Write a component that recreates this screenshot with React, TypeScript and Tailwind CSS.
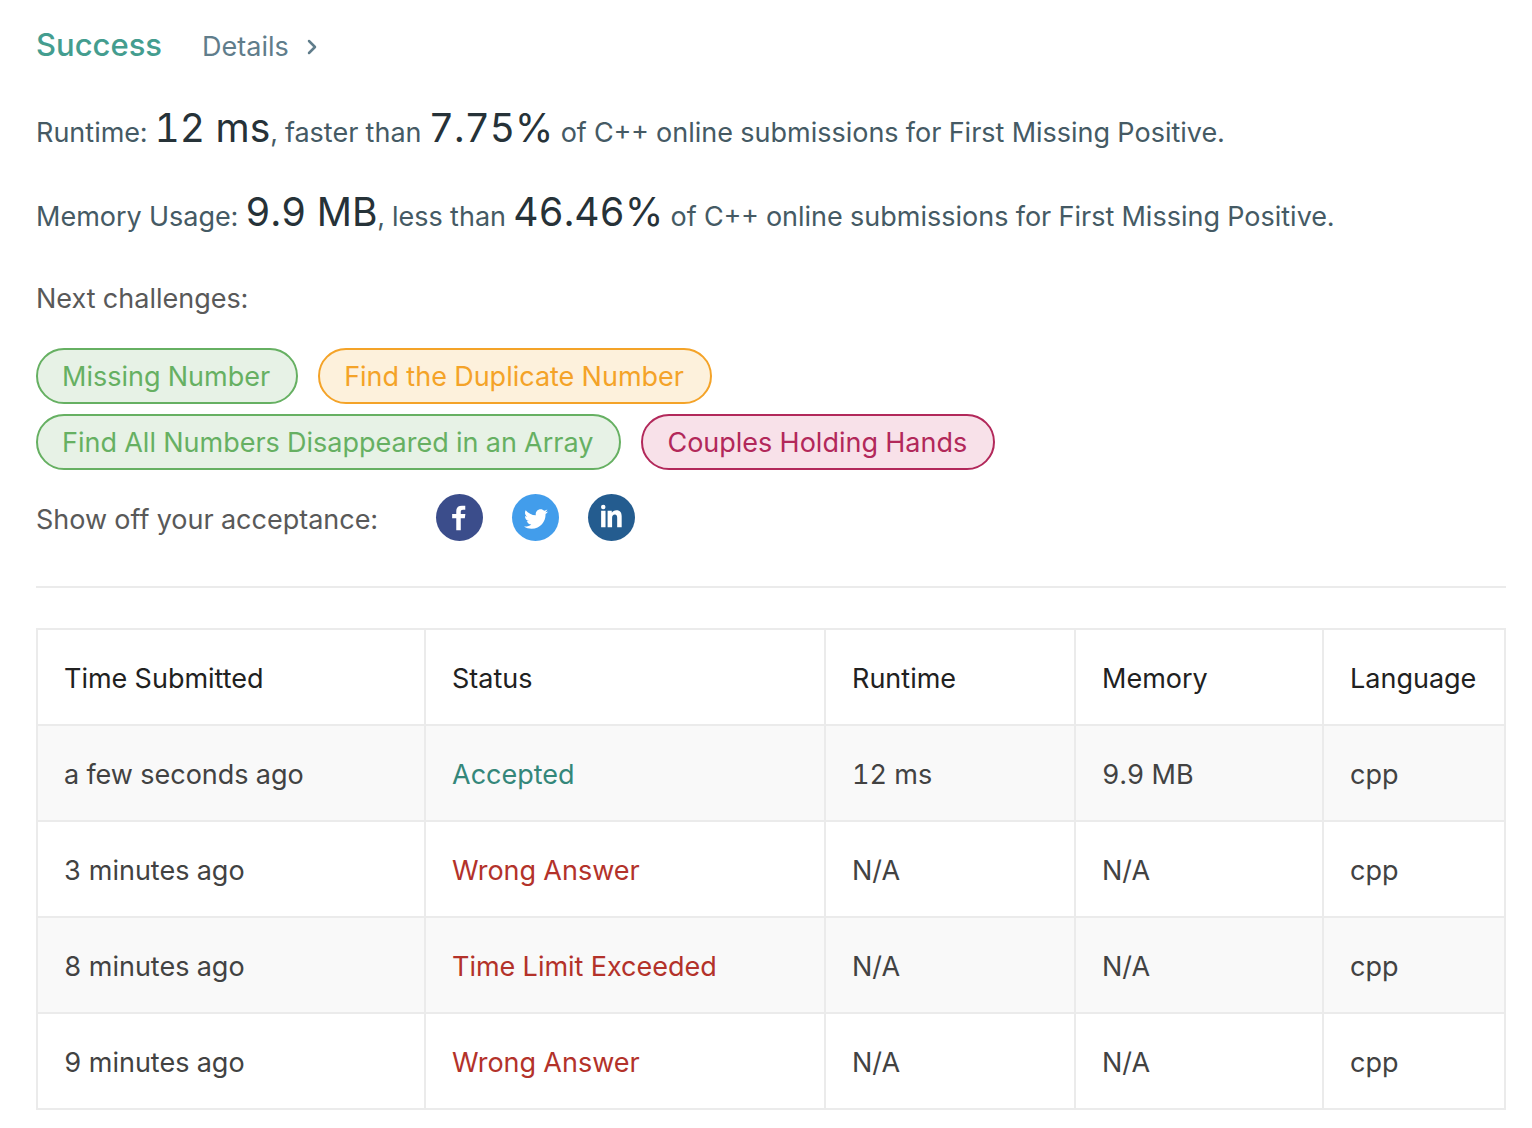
import { FaTwitter } from 'react-icons/fa';
import { ChevronRight } from 'lucide-react';

const tones = {
  easy: 'border-[#66b062] bg-[#e7f2e6] text-[#66b062]',
  medium: 'border-[#f4a328] bg-[#fdf1dc] text-[#f4a328]',
  hard: 'border-[#b2285a] bg-[#f8e1e9] text-[#b2285a]',
};

const challenges = [
  [
    { name: 'Missing Number', tone: tones.easy },
    { name: 'Find the Duplicate Number', tone: tones.medium },
  ],
  [
    { name: 'Find All Numbers Disappeared in an Array', tone: tones.easy },
    { name: 'Couples Holding Hands', tone: tones.hard },
  ],
];

function FacebookIcon() {
  return (
    <svg viewBox="0 0 48 48" className="size-full" fill="currentColor">
      <path d="M20.700 37V24.800h-4.200v-4.400h4.200v-2.800c0-3.800 1.900-5.700 5.700-5.700h3.500v4.300h-2.300c-1.700 0-2.300.7-2.300 2.200v2h4.700l-.6 4.400h-4.100V37z" />
    </svg>
  );
}

function TwitterIcon() {
  return <FaTwitter className="mt-[2px] size-6" />;
}

function LinkedinIcon() {
  return (
    <svg viewBox="0 0 48 48" className="size-full" fill="currentColor">
      <circle cx="15.600" cy="13.200" r="2.300" />
      <path d="M13.400 17h4.500v17h-4.500zM20 17h4.300v2.200c.9-1.600 2.600-2.600 4.700-2.600 4 0 5.400 2.500 5.400 6.400v11h-4.600v-9.800c0-2-.6-3.300-2.300-3.300-2 0-2.900 1.400-2.900 3.500V34H20z" />
    </svg>
  );
}

const socials = [
  { label: 'Facebook', icon: FacebookIcon, color: 'bg-[#3b4d8b]' },
  { label: 'Twitter', icon: TwitterIcon, color: 'bg-[#429deb]' },
  { label: 'LinkedIn', icon: LinkedinIcon, color: 'bg-[#245c8f]' },
];

const submissions = [
  { time: 'a few seconds ago', status: 'Accepted', runtime: '12 ms', memory: '9.9 MB', language: 'cpp' },
  { time: '3 minutes ago', status: 'Wrong Answer', runtime: 'N/A', memory: 'N/A', language: 'cpp' },
  { time: '8 minutes ago', status: 'Time Limit Exceeded', runtime: 'N/A', memory: 'N/A', language: 'cpp' },
  { time: '9 minutes ago', status: 'Wrong Answer', runtime: 'N/A', memory: 'N/A', language: 'cpp' },
];

const cell = 'border-2 border-[#ebebeb] px-[26px] pt-1 font-normal';

function Figure({ children }: { children: string }) {
  return <span className="text-[39px] leading-none text-[#263238]">{children}</span>;
}

export default function App() {
  return (
    <main className="min-h-screen bg-white pt-5 pr-[26px] pb-[18px] pl-9 font-['Inter',sans-serif] text-[27px] tabular-nums text-[#424242]">
      <header className="flex h-[52px] items-center gap-10">
        <h1 className="pb-[2px] text-[31px] font-medium text-[#449d8f]">Success</h1>
        <a href="#details" className="flex items-center gap-[11px] pt-[2px] text-[#607d8b]">
          Details <ChevronRight className="size-6" strokeWidth={2.5} />
        </a>
      </header>

      <section className="mt-[19px] text-[#455a64]">
        <p className="leading-[84px]">
          Runtime: <Figure>12 ms</Figure>, faster than <Figure>7.75%</Figure> of C++ online submissions for First Missing Positive.
        </p>
        <p className="leading-[84px]">
          Memory Usage: <Figure>9.9 MB</Figure>, less than <Figure>46.46%</Figure> of C++ online submissions for First Missing Positive.
        </p>
      </section>

      <section className="mt-5">
        <h2 className="leading-[40px] text-[#595959]">Next challenges:</h2>
        <div className="mt-[29px] flex flex-col gap-[10px]">
          {challenges.map((row, index) => (
            <div key={index} className="flex gap-5">
              {row.map((challenge) => (
                <a
                  key={challenge.name}
                  href="#problem"
                  className={`flex h-14 items-center rounded-full border-2 pt-[2px] pr-[26px] pl-6 ${challenge.tone}`}
                >
                  {challenge.name}
                </a>
              ))}
            </div>
          ))}
        </div>
      </section>

      <section className="mt-6 flex items-center text-[#595959]">
        <span className="w-[400px] pt-[6px]">Show off your acceptance:</span>
        <div className="flex gap-[29px]">
          {socials.map((social) => (
            <button
              key={social.label}
              aria-label={social.label}
              className={`flex size-[47px] items-center justify-center rounded-full text-white ${social.color}`}
            >
              <social.icon />
            </button>
          ))}
        </div>
      </section>

      <hr className="mt-[45px] mb-10 border-t-2 border-[#ebebeb]" />

      <table className="w-full table-fixed border-collapse border-2 border-[#ebebeb] text-left">
        <colgroup>
          <col className="w-[388px]" />
          <col className="w-[400px]" />
          <col className="w-[250px]" />
          <col className="w-[248px]" />
          <col />
        </colgroup>
        <thead>
          <tr className="h-24 text-[#212121]">
            {['Time Submitted', 'Status', 'Runtime', 'Memory', 'Language'].map((title) => (
              <th key={title} className={cell}>{title}</th>
            ))}
          </tr>
        </thead>
        <tbody>
          {submissions.map((row) => (
            <tr key={row.time} className="h-24 odd:bg-[#f9f9f9]">
              <td className={cell}>{row.time}</td>
              <td className={cell}>
                <a href="#submission" className={row.status === 'Accepted' ? 'text-[#34877a]' : 'text-[#b3322a]'}>
                  {row.status}
                </a>
              </td>
              <td className={cell}>{row.runtime}</td>
              <td className={cell}>{row.memory}</td>
              <td className={cell}>{row.language}</td>
            </tr>
          ))}
        </tbody>
      </table>
    </main>
  );
}
